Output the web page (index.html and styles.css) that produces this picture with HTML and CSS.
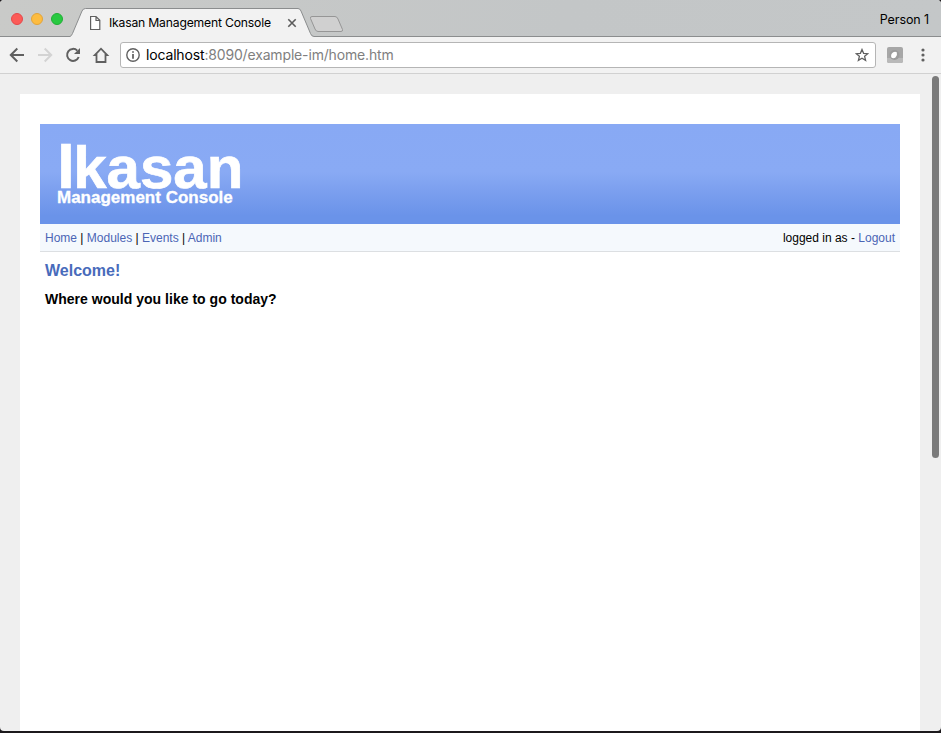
FILE: index.html
```html
<!DOCTYPE html>
<html lang="en">
<head>
<meta charset="utf-8">
<title>Ikasan Management Console</title>
<link rel="stylesheet" href="styles.css">
</head>
<body>
<div class="window">
  <header class="tabstrip">
    <svg class="tab-shapes" width="941" height="37" viewBox="0 0 941 37">
      <path d="M0 36.500H70Q71.500 36 72.500 33.500L82 11Q83 8.500 85.500 8.500H298Q300 8.500 301 11L310.500 33.500Q311.500 36.500 314 36.500H941V38H0Z" fill="#f2f2f2" stroke="#8b8d8e"/>
      <path d="M312 16.500H335Q337 16.500 338 19L342.500 29.500Q343 31.500 341 31.500H318Q316 31.500 315 29L310.500 18.500Q310 16.500 312 16.500Z" fill="#d0d0d0" stroke="#969696"/>
    </svg>
    <div class="lights"><i class="light red"></i><i class="light amber"></i><i class="light green"></i></div>
    <div class="tab">
      <svg width="12" height="16" viewBox="0 0 12 16"><path d="M0.600 1.500H6L9.800 5.300V14.500H0.600ZM6 1.500V5.500H9.800" fill="#fff" stroke="#606060" stroke-width="1.200"/></svg>
      <span class="tab-title">Ikasan Management Console</span>
      <svg class="tab-close" width="10" height="10" viewBox="0 0 10 10"><path d="M1.300 1.300L8.700 8.700M8.700 1.300L1.300 8.700" stroke="#5c5c5c" stroke-width="1.600"/></svg>
    </div>
    <span class="person">Person 1</span>
  </header>
  <div class="toolbar">
    <svg class="nav-icons" width="120" height="36" viewBox="0 37 120 36" fill="none" stroke="#606060" stroke-width="2">
      <path d="M24 55H11M17.300 48.500L10.800 55L17.300 61.500"/>
      <path d="M38 55H51M44.700 48.500L51.200 55L44.700 61.500" stroke="#d3d3d3"/>
      <path d="M77.300 50.600A6 6 0 1 0 78.700 57"/>
      <path d="M80 48V54H74Z" fill="#606060" stroke="none"/>
      <path d="M96.500 55V62H105.500V55H107.200L101 48.700L94.800 55Z" stroke-width="1.800"/>
    </svg>
    <div class="address">
      <svg width="14" height="14" viewBox="0 0 14 14"><circle cx="7" cy="7" r="6.200" fill="none" stroke="#606060" stroke-width="1.400"/><path d="M6.200 3.200H7.800V4.800H6.200ZM6.200 6H7.800V10.700H6.200Z" fill="#505050"/></svg>
      <span class="url"><b>localhost</b>:8090/example-im/home.htm</span>
      <svg class="star" width="14" height="14" viewBox="0 0 14 14"><path d="M7 1.500L8.600 5.300L12.800 5.700L9.600 8.300L10.600 12.400L7 10.200L3.400 12.400L4.400 8.300L1.200 5.700L5.400 5.300Z" fill="none" stroke="#606060" stroke-width="1.300"/></svg>
    </div>
    <svg class="extension" width="16" height="16" viewBox="0 0 16 16"><rect width="16" height="16" rx="2" fill="#a7a7a7"/><path d="M0 11H16V14Q16 16 14 16H2Q0 16 0 14Z" fill="#b9b9b9"/><circle cx="7.500" cy="8" r="5" fill="#9c9c9c"/><path d="M4.200 10.300Q3.600 7 6.200 5.300Q8 4.200 9.800 5.200Q10.700 8 8.500 10.500Q6.200 12.200 4.200 10.300Z" fill="#fff"/></svg>
    <svg class="menu" width="4" height="14" viewBox="0 0 4 14" fill="#606060"><circle cx="2" cy="2" r="1.600"/><circle cx="2" cy="7" r="1.600"/><circle cx="2" cy="12" r="1.600"/></svg>
  </div>
  <div class="viewport">
    <main class="page">
      <div class="banner">
        <div class="brand">Ikasan</div>
        <div class="subbrand">Management Console</div>
      </div>
      <nav class="navbar">
        <span><a>Home</a> | <a>Modules</a> | <a>Events</a> | <a>Admin</a></span>
        <span>logged in as - <a>Logout</a></span>
      </nav>
      <h1>Welcome!</h1>
      <h2>Where would you like to go today?</h2>
    </main>
    <div class="scroll-thumb"></div>
  </div>
</div>
</body>
</html>
```
FILE: styles.css
```css
* { box-sizing: border-box; }
body {
  margin: 0;
  height: 733px;
  overflow: hidden;
  background: #1c191c;
  font-family: "Liberation Sans", Arial, sans-serif;
}
svg { display: block; flex: none; }
.window {
  display: flex;
  flex-direction: column;
  height: 731px;
  border-radius: 4px;
  overflow: hidden;
  background: #efefef;
}
.tabstrip {
  position: relative;
  display: flex;
  flex: none;
  height: 37px;
  background: linear-gradient(100deg, #c9cac8, #c3c6c7 60%, #c4c7c8);
  font: 12.5px/16px Inter, Roboto, sans-serif;
  color: #000;
}
.tab-shapes { position: absolute; left: 0; top: 0; }
.lights { position: relative; display: flex; gap: 8px; padding: 13px 0 0 11px; width: 90px; }
.light { width: 12px; height: 12px; border-radius: 50%; }
.red { background: #fc5b57; border: 1px solid #e5484b; }
.amber { background: #fdbc40; border: 1px solid #e2a43a; }
.green { background: #28c941; border: 1px solid #20ae36; }
.tab { position: relative; display: flex; width: 215px; padding-top: 15px; }
.tab-title { margin: 0 0 0 7px; width: 178px; white-space: nowrap; font-size: 12.2px; letter-spacing: -0.2px; }
.tab-close { margin-top: 3px; }
.person { position: relative; margin: 12px 12px 0 auto; letter-spacing: -0.1px; }
.toolbar {
  display: flex;
  flex: none;
  align-items: center;
  height: 37px;
  background: #f2f2f2;
  border-bottom: 1px solid #d1d1d1;
}
.address {
  display: flex;
  align-items: center;
  width: 756px;
  height: 26px;
  padding: 0 6px 0 5px;
  background: #fff;
  border: 1px solid #b5b5b5;
  border-radius: 3px;
}
.url { margin-left: 6px; font: 14px/18px Inter, Roboto, sans-serif; letter-spacing: -0.16px; color: #808080; white-space: nowrap; }
.url b { font-weight: 400; color: #000; }
.star { margin-left: auto; }
.extension { margin-left: 11px; }
.menu { margin-left: 18px; }
.viewport { position: relative; flex: 1; padding: 20px 21px 0 20px; }
.page { height: 637px; padding: 30px 20px 0; background: #fff; }
.banner {
  height: 100px;
  padding: 13px 0 0 17px;
  background: linear-gradient(#88a9f4 0, #89aaf4 48%, #7fa2f0 62%, #6a93e9 92%, #6a93e9);
  color: #fff;
  font-weight: bold;
}
.brand { font-size: 60px; line-height: 60px; height: 52px; -webkit-text-stroke: 0.7px #fff; }
.brand::first-letter { font-family: Roboto, sans-serif; font-size: 61px; line-height: 60px; letter-spacing: -1.7px; }
.subbrand { font-size: 17px; line-height: 17px; -webkit-text-stroke: 0.3px #fff; }
.navbar {
  display: flex;
  justify-content: space-between;
  height: 28px;
  padding: 0 5px;
  background: #f5f9fd;
  border-bottom: 1px solid #dcdfe2;
  font-size: 12px;
  line-height: 28px;
  color: #000;
}
.navbar a { color: #4b65b5; }
h1 { margin: 9px 5px 0; font-size: 16px; line-height: 20px; color: #486bbb; }
h2 { margin: 9px 5px 0; font-size: 14px; line-height: 18px; letter-spacing: 0.02px; color: #000; }
.scroll-thumb { position: absolute; left: 932px; top: 2px; width: 7px; height: 382px; border-radius: 4px; background: #7b7b7b; }
```
